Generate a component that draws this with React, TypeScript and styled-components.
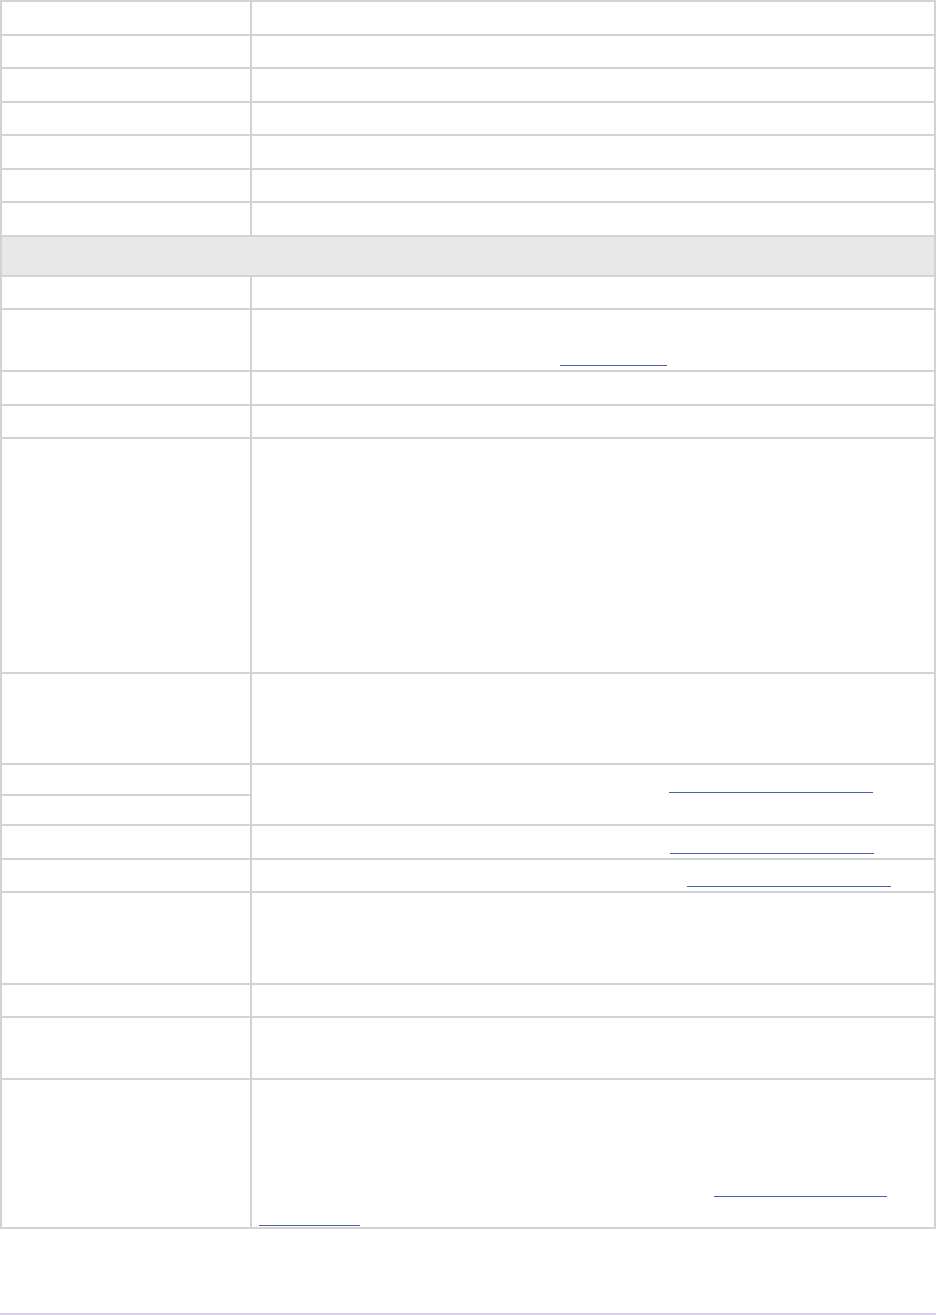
import React from 'react';
import styled, {createGlobalStyle} from 'styled-components';

const LINE = 28.8;
const PAD = 1.35;
const BORDER = 2;

type LinkInfo = {line: number; x: number; w: number; low?: boolean};
type RowInfo = {lines: number; section?: boolean; split?: boolean; links?: LinkInfo[]};

const rows: RowInfo[] = [
  {lines: 1}, {lines: 1}, {lines: 1}, {lines: 1}, {lines: 1}, {lines: 1}, {lines: 1},
  {lines: 1, section: true},
  {lines: 1},
  {lines: 2, links: [{line: 2, x: 301, w: 107}]},
  {lines: 1},
  {lines: 1},
  {lines: 8},
  {lines: 3},
  {lines: 2, split: true, links: [{line: 1, x: 410, w: 204}]},
  {lines: 1, links: [{line: 1, x: 411, w: 204}]},
  {lines: 1, links: [{line: 1, x: 428, w: 204}]},
  {lines: 3},
  {lines: 1},
  {lines: 2},
  {lines: 5, links: [{line: 4, x: 455, w: 173, low: true}, {line: 5, x: 0, w: 101, low: true}]},
];

const GlobalStyle = createGlobalStyle`
  html, body { margin: 0; padding: 0; background: #fff; }
  body { font-family: "Liberation Sans", Arial, sans-serif; font-size: 16px; color: #222; }
`;

const Page = styled.div`
  display: flex; flex-direction: column;
  min-height: 100vh;
`;

const Sheet = styled.div`
  display: grid;
  grid-template-columns: 250px 1fr;
  border-top: ${BORDER}px solid #d3d3d3;
  border-left: ${BORDER}px solid #d3d3d3;
`;

const Cell = styled.div<{$h: number; $wide?: boolean; $span?: number; $shade?: boolean}>`
  box-sizing: border-box;
  min-height: ${p => p.$h}px;
  padding: ${PAD}px 7px;
  border-right: ${BORDER}px solid #d3d3d3;
  border-bottom: ${BORDER}px solid #d3d3d3;
  background: ${p => (p.$shade ? '#e8e8e8' : '#fff')};
  ${p => p.$wide && 'grid-column: 1 / -1;'}
  ${p => p.$span && `grid-row: span ${p.$span};`}
`;

const TextLine = styled.div`
  height: ${LINE}px;
  line-height: ${LINE}px;
`;

const Ref = styled.a<{$x: number; $w: number; $low?: boolean}>`
  display: block;
  box-sizing: border-box;
  margin-left: ${p => p.$x}px;
  width: ${p => p.$w}px;
  height: ${p => (p.$low ? 29.1 : 25.7)}px;
  border-bottom: 1.7px solid #4a5fae;
`;

const Footer = styled.footer`
  margin-top: auto;
  height: 0;
  border-top: 2px solid #d8d0e8;
`;

const heightOf = (lines: number) => lines * LINE + PAD * 2 + BORDER;

const Value = ({row}: {row: RowInfo}) => {
  const last = row.links ? Math.max(...row.links.map(l => l.line)) : 0;
  return (
    <>
      {Array.from({length: last}, (_, i) => {
        const link = row.links?.find(l => l.line === i + 1);
        return (
          <TextLine key={i}>
            {link && <Ref href="#" $x={link.x} $w={link.w} $low={link.low} />}
          </TextLine>
        );
      })}
    </>
  );
};

export default function App() {
  return (
    <Page>
      <GlobalStyle />
      <Sheet>
        {rows.map((row, index) => {
          if (row.section) {
            return <Cell key={index} $h={40} $wide $shade />;
          }
          if (row.split) {
            return (
              <React.Fragment key={index}>
                <Cell $h={30.5} />
                <Cell $h={61} $span={2}>
                  <Value row={row} />
                </Cell>
                <Cell $h={30.5} />
              </React.Fragment>
            );
          }
          return (
            <React.Fragment key={index}>
              <Cell $h={heightOf(row.lines)} />
              <Cell $h={heightOf(row.lines)}>
                <Value row={row} />
              </Cell>
            </React.Fragment>
          );
        })}
      </Sheet>
      <Footer />
    </Page>
  );
}
